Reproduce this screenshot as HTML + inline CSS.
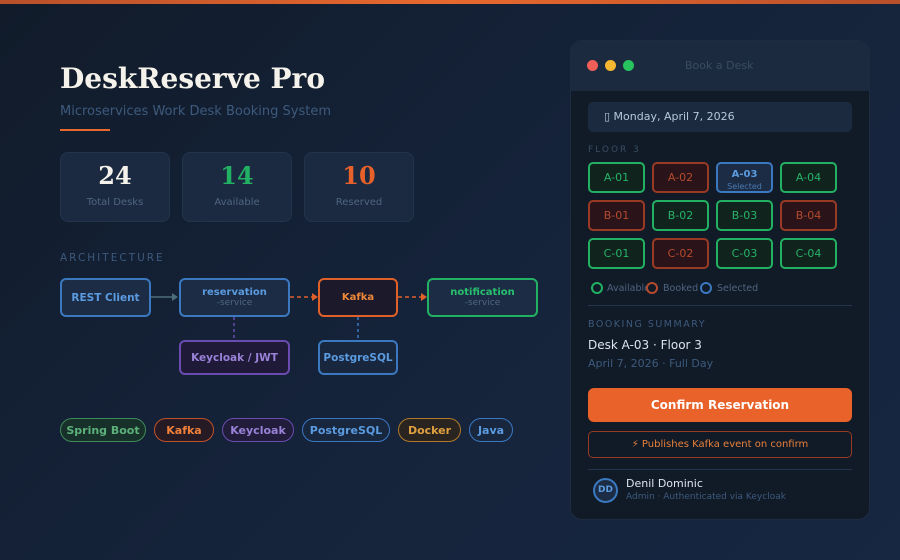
<!DOCTYPE html>
<html><head><meta charset="utf-8"><style>
*{margin:0;padding:0;box-sizing:border-box}
body{width:900px;height:560px;overflow:hidden;position:relative;font-family:"DejaVu Sans","Liberation Sans",sans-serif;background:linear-gradient(135deg,#111b2a 0%,#15233a 50%,#172641 100%)}
.a{position:absolute}
.top{left:0;top:0;width:900px;height:4px;background:linear-gradient(90deg,#b8502a,#e8692e,#b8502a)}
.stat{top:152px;width:110px;height:70px;background:#1b2a40;border:1px solid #22344c;border-radius:8px;text-align:center}
.stat b{display:block;font-family:"DejaVu Serif",serif;font-size:24px;margin-top:8px}
.stat span{font-size:10px;color:#4f6580}
.box{border:2px solid;border-radius:6px;text-align:center;font-weight:bold;font-size:10px;display:flex;flex-direction:column;justify-content:center}
.box i{font-style:normal;font-weight:normal;color:#4f6580;font-size:9px}
.pill{top:418px;height:24px;border:1.5px solid;border-radius:12px;font-size:11px;font-weight:bold;display:flex;align-items:center;justify-content:center}
.d{width:57px;height:31px;border:2px solid;border-radius:5px;font-size:11px;text-align:center;line-height:27px}
.g{border-color:#22b163;background:#10231c;color:#27b36a}
.r{border-color:#9a3a24;background:#2a1419;color:#b54a2c}
</style></head><body>
<div class="a top"></div>
<div class="a" style="left:60px;top:62px;font-family:'DejaVu Serif',serif;font-weight:bold;font-size:28px;color:#f4f2ea">DeskReserve Pro</div>
<div class="a" style="left:60px;top:104px;font-size:13px;color:#3d5a7c">Microservices Work Desk Booking System</div>
<div class="a" style="left:60px;top:129px;width:50px;height:2px;background:#e8692e"></div>
<div class="a stat" style="left:60px"><b style="color:#f4f2ea">24</b><span>Total Desks</span></div>
<div class="a stat" style="left:182px"><b style="color:#22b163">14</b><span>Available</span></div>
<div class="a stat" style="left:304px"><b style="color:#e8602a">10</b><span>Reserved</span></div>
<div class="a" style="left:60px;top:252px;font-size:10.5px;letter-spacing:2px;color:#3d5a7c">ARCHITECTURE</div>
<div class="a box" style="left:60px;top:278px;width:91px;height:39px;border-color:#3a78c0;background:#1c2c45;color:#5b9be0;font-size:10.5px">REST Client</div>
<div class="a box" style="left:179px;top:278px;width:111px;height:39px;border-color:#3a78c0;background:#1c2c45;color:#5b9be0">reservation<i>-service</i></div>
<div class="a box" style="left:318px;top:278px;width:80px;height:39px;border-color:#e0602a;background:#1c1a2a;color:#f0883a">Kafka</div>
<div class="a box" style="left:427px;top:278px;width:111px;height:39px;border-color:#22b163;background:#1c2c45;color:#28c06e">notification<i>-service</i></div>
<div class="a box" style="left:179px;top:340px;width:111px;height:35px;border-color:#6a4cb0;background:#1e1a38;color:#9a82d8;font-size:10.5px">Keycloak / JWT</div>
<div class="a box" style="left:318px;top:340px;width:80px;height:35px;border-color:#3a78c0;background:#18263e;color:#5b9be0;font-size:10.5px">PostgreSQL</div>
<svg class="a" style="left:0;top:0" width="560" height="420">
<line x1="151" y1="297" x2="172" y2="297" stroke="#4c6e7c" stroke-width="1.5"/><path d="M172 293 L178 297 L172 301Z" fill="#4c6e7c"/>
<line x1="290" y1="297" x2="312" y2="297" stroke="#e0602a" stroke-width="1.5" stroke-dasharray="4 3"/><path d="M312 293 L318 297 L312 301Z" fill="#e0602a"/>
<line x1="398" y1="297" x2="421" y2="297" stroke="#e0602a" stroke-width="1.5" stroke-dasharray="4 3"/><path d="M421 293 L427 297 L421 301Z" fill="#e0602a"/>
<line x1="234" y1="317" x2="234" y2="340" stroke="#6a4cb0" stroke-width="1.5" stroke-dasharray="3 3"/>
<line x1="358" y1="317" x2="358" y2="340" stroke="#3a78c0" stroke-width="1.5" stroke-dasharray="3 3"/>
</svg>
<div class="a pill" style="left:60px;width:86px;border-color:#3e8a58;background:#18302a;color:#5cb07a">Spring Boot</div>
<div class="a pill" style="left:154px;width:60px;border-color:#c0502a;background:#261a24;color:#f0803a">Kafka</div>
<div class="a pill" style="left:222px;width:72px;border-color:#6a4cb0;background:#201c3a;color:#9a82d8">Keycloak</div>
<div class="a pill" style="left:302px;width:88px;border-color:#3a78c0;background:#18263e;color:#5b9be0">PostgreSQL</div>
<div class="a pill" style="left:398px;width:63px;border-color:#b07a2a;background:#2a2420;color:#e0a040">Docker</div>
<div class="a pill" style="left:469px;width:44px;border-color:#3a78c0;background:#18263e;color:#5b9be0">Java</div>

<div class="a" style="left:570px;top:40px;width:300px;height:480px;background:#111a27;border:1px solid #1e2c40;border-radius:12px;overflow:hidden">
<div style="height:50px;background:#1b2a3e;position:relative">
<span class="a" style="left:16px;top:19px;width:11px;height:11px;border-radius:50%;background:#ef5f57"></span>
<span class="a" style="left:34px;top:19px;width:11px;height:11px;border-radius:50%;background:#f5b631"></span>
<span class="a" style="left:52px;top:19px;width:11px;height:11px;border-radius:50%;background:#27c35f"></span>
<span class="a" style="left:114px;top:18px;font-size:11px;color:#3a4c62">Book a Desk</span>
</div>
</div>
<div class="a" style="left:588px;top:102px;width:264px;height:30px;background:#1b2a3e;border-radius:5px;font-size:11px;color:#b8c8dc;padding:8px 0 0 16px">▯ Monday, April 7, 2026</div>
<div class="a" style="left:588px;top:145px;font-size:9px;letter-spacing:2px;color:#3a4c62">FLOOR 3</div>
<div class="a d g" style="left:588px;top:162px">A-01</div>
<div class="a d r" style="left:652px;top:162px">A-02</div>
<div class="a d" style="left:716px;top:162px;border-color:#3a78c0;background:#1c2c45;color:#5b9be0;line-height:11px;padding-top:4px"><b style="font-size:10px">A-03</b><br><span style="font-size:8px;color:#4a7ab0">Selected</span></div>
<div class="a d g" style="left:780px;top:162px">A-04</div>
<div class="a d r" style="left:588px;top:200px">B-01</div>
<div class="a d g" style="left:652px;top:200px">B-02</div>
<div class="a d g" style="left:716px;top:200px">B-03</div>
<div class="a d r" style="left:780px;top:200px">B-04</div>
<div class="a d g" style="left:588px;top:238px">C-01</div>
<div class="a d r" style="left:652px;top:238px">C-02</div>
<div class="a d g" style="left:716px;top:238px">C-03</div>
<div class="a d g" style="left:780px;top:238px">C-04</div>
<div class="a" style="left:591px;top:282px;width:12px;height:12px;border:2px solid #22b163;border-radius:50%"></div>
<div class="a" style="left:607px;top:283px;font-size:9.5px;color:#4f6580;width:40px;overflow:hidden;white-space:nowrap">Available</div>
<div class="a" style="left:646px;top:282px;width:12px;height:12px;border:2px solid #b54a2c;border-radius:50%"></div>
<div class="a" style="left:663px;top:283px;font-size:9.5px;color:#4f6580">Booked</div>
<div class="a" style="left:700px;top:282px;width:12px;height:12px;border:2px solid #3a78c0;border-radius:50%"></div>
<div class="a" style="left:717px;top:283px;font-size:9.5px;color:#4f6580">Selected</div>
<div class="a" style="left:588px;top:305px;width:264px;height:1px;background:#22344c"></div>
<div class="a" style="left:588px;top:319px;font-size:9.5px;letter-spacing:1.5px;color:#3d5a7c">BOOKING SUMMARY</div>
<div class="a" style="left:588px;top:338px;font-size:12px;color:#dce4ee">Desk A-03 · Floor 3</div>
<div class="a" style="left:588px;top:357px;font-size:11px;color:#3d5a7c">April 7, 2026 · Full Day</div>
<div class="a" style="left:588px;top:388px;width:264px;height:34px;background:#e8622a;border-radius:6px;text-align:center;line-height:34px;font-weight:bold;font-size:12px;color:#fff">Confirm Reservation</div>
<div class="a" style="left:588px;top:431px;width:264px;height:27px;border:1.5px solid #9a3a24;border-radius:5px;text-align:center;line-height:25px;font-size:10px;color:#e8803a">⚡ Publishes Kafka event on confirm</div>
<div class="a" style="left:588px;top:469px;width:264px;height:1px;background:#22344c"></div>
<div class="a" style="left:593px;top:478px;width:25px;height:25px;border:2px solid #3a78c0;border-radius:50%;background:#1c2c45;color:#5b9be0;font-size:9px;font-weight:bold;text-align:center;line-height:21px">DD</div>
<div class="a" style="left:626px;top:477px;font-size:11px;color:#dce4ee">Denil Dominic</div>
<div class="a" style="left:626px;top:492px;font-size:9px;color:#3d5a7c">Admin · Authenticated via Keycloak</div>
</body></html>
